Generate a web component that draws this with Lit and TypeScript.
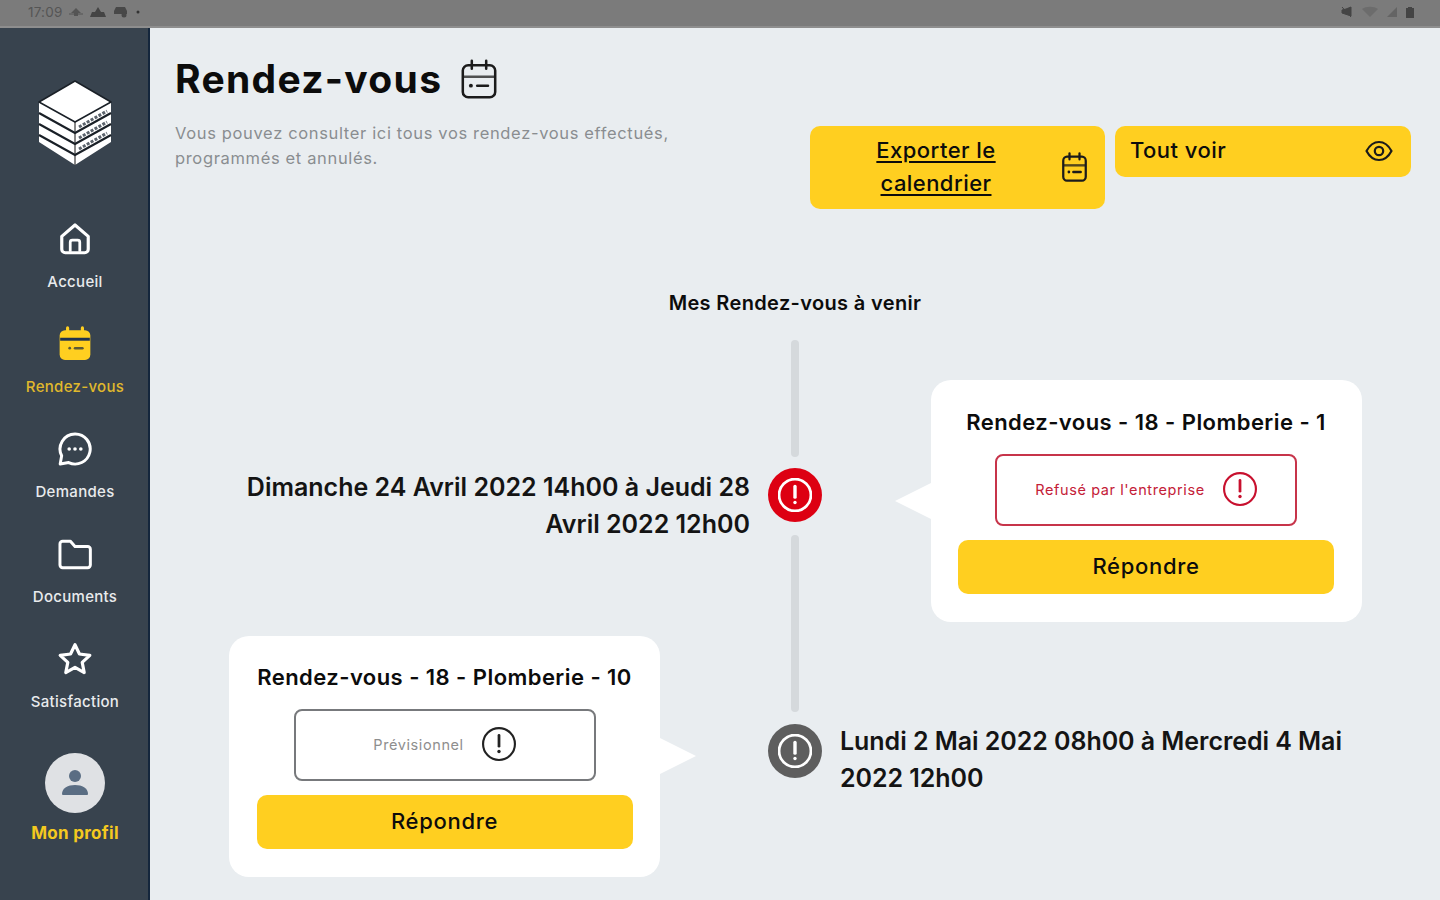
import { LitElement, html, css, svg } from "lit";
import { customElement } from "lit/decorators.js";

const calendar = (stroke: string, w = 2) => svg`
  <rect x="3" y="4.500" width="18" height="18" rx="3" fill="none" stroke=${stroke} stroke-width=${w}/>
  <path d="M8 2v4.500M16 2v4.500" stroke=${stroke} stroke-width=${w} stroke-linecap="round" fill="none"/>
  <path d="M3 11h18" stroke=${stroke} stroke-width=${w} fill="none" opacity=".75"/>
  <path d="M11 16h6" stroke=${stroke} stroke-width=${w} stroke-linecap="round" fill="none"/>
  <circle cx="7.500" cy="16" r="1.100" fill=${stroke}/>`;

const alertIcon = (c: string, sw = 2) => svg`
  <circle cx="16" cy="16" r="15" fill="none" stroke=${c} stroke-width=${sw}/>
  <path d="M16 8v10" stroke=${c} stroke-width=${sw + 0.6} stroke-linecap="round"/>
  <circle cx="16" cy="23" r="1.600" fill=${c}/>`;

const NAV = [
  {
    label: "Accueil",
    active: false,
    icon: svg`<path d="M3.500 13.500 16 2.800l12.500 10.700v12.200a3.300 3.300 0 0 1-3.300 3.300H6.800a3.300 3.300 0 0 1-3.300-3.300Z" fill="none" stroke="#fff" stroke-width="3" stroke-linejoin="round"/>
      <path d="M11.500 28V19a2 2 0 0 1 2-2h5a2 2 0 0 1 2 2v9" fill="none" stroke="#fff" stroke-width="2.600"/>`,
  },
  {
    label: "Rendez-vous",
    active: true,
    icon: svg`<rect x="1.500" y="3" width="29" height="28" rx="5" fill="#ffcf20"/>
      <path d="M9 .8v6M23 .8v6" stroke="#ffcf20" stroke-width="3" stroke-linecap="round"/>
      <path d="M2 11.500h28" stroke="#22334d" stroke-width="2.800"/>
      <path d="M16 20h7" stroke="#5c5a36" stroke-width="2.400" stroke-linecap="round"/>
      <circle cx="11" cy="20" r="1.300" fill="#5c5a36"/>`,
  },
  {
    label: "Demandes",
    active: false,
    icon: svg`<path d="M16 1.800a14.200 14.200 0 1 1-6 27L2 30.200l1.400-7.800A14.200 14.200 0 0 1 16 1.800Z" fill="none" stroke="#fff" stroke-width="2.800" stroke-linejoin="round"/>
      <circle cx="10.500" cy="16" r="1.700" fill="#fff"/><circle cx="16" cy="16" r="1.700" fill="#fff"/><circle cx="21.500" cy="16" r="1.700" fill="#fff"/>`,
  },
  {
    label: "Documents",
    active: false,
    icon: svg`<path d="M1.800 6.500A2.500 2.500 0 0 1 4.300 4h7.400l4.300 5h12a2.500 2.500 0 0 1 2.500 2.500v15A2.500 2.500 0 0 1 28 29H4.300a2.500 2.500 0 0 1-2.500-2.500Z" fill="none" stroke="#fff" stroke-width="2.800" stroke-linejoin="round"/>`,
  },
  {
    label: "Satisfaction",
    active: false,
    icon: svg`<path d="m16 2.500 4.200 8.800 9.800 1.300-7.200 6.600 1.900 9.600-8.700-4.800-8.700 4.800 1.900-9.600L2 12.600l9.800-1.300Z" fill="none" stroke="#fff" stroke-width="3" stroke-linejoin="round"/>`,
  },
];

@customElement("app-root")
export class AppRoot extends LitElement {
  static styles = css`
    :host {
      display: block;
      width: 1440px;
      height: 900px;
      overflow: hidden;
      font-family: Inter, "Noto Sans", "Liberation Sans", sans-serif;
      color: #0c0c0c;
    }
    .status {
      height: 28px;
      background: #7b7b7b;
      box-sizing: border-box;
      border-bottom: 2px solid #8e8e8e;
      display: flex;
      align-items: center;
      justify-content: space-between;
      padding: 0 25px 2px 28px;
      color: #555;
      font-size: 13.500px;
      letter-spacing: 0.2px;
    }
    .status-left, .status-right { display: flex; align-items: center; gap: 7px; }
    .status svg { display: block; }
    .body { display: flex; height: 872px; }
    .side {
      width: 150px;
      flex: none;
      box-sizing: border-box;
      background: #38434e;
      border-right: 2px solid #14263c;
      display: flex;
      flex-direction: column;
      align-items: center;
      padding: 52px 0 0 2px;
    }
    .logo { display: block; margin-bottom: 55px; }
    .nav { display: flex; flex-direction: column; align-items: center; gap: 33px; width: 100%; }
    .item { display: flex; flex-direction: column; align-items: center; height: 72px; }
    .item svg { display: block; width: 36px; height: 36px; }
    .item span {
      margin-top: 14px;
      font-size: 15px;
      line-height: 22px;
      font-weight: 500;
      letter-spacing: 0.3px;
      color: #e9ebed;
      white-space: nowrap;
    }
    .item.active span { color: #e0b92c; }
    .avatar {
      width: 60px;
      height: 60px;
      border-radius: 50%;
      background: #dfe1e4;
      margin-top: 40px;
      display: flex;
      align-items: center;
      justify-content: center;
    }
    .profile {
      margin-top: 9px;
      font-size: 17px;
      line-height: 22px;
      font-weight: 700;
      letter-spacing: 0.3px;
      color: #f4c91f;
    }
    .main { flex: 1; background: #e9edf0; min-width: 0; }
    .head {
      display: flex;
      justify-content: space-between;
      align-items: flex-start;
      padding: 27px 29px 0 25px;
    }
    .title { display: flex; align-items: center; gap: 19px; }
    h1 {
      margin: 0;
      font-size: 39px;
      line-height: 48px;
      font-weight: 700;
      letter-spacing: 1.3px;
    }
    .title svg { display: block; width: 36px; height: 40px; }
    .sub {
      margin: 17.500px 0 0;
      font-size: 16.500px;
      line-height: 25px;
      letter-spacing: 0.65px;
      color: #8a8d90;
    }
    .actions { display: flex; gap: 10px; margin-top: 71px; align-items: flex-start; }
    .btn {
      width: 295px;
      box-sizing: border-box;
      background: #ffcf20;
      border-radius: 10px;
      display: flex;
      align-items: center;
      font-size: 22px;
      font-weight: 500;
      line-height: 33px;
      letter-spacing: 0.45px;
    }
    .btn.export { padding: 8px 18px 9px 0; }
    .btn.export u { flex: 1; text-align: center; text-underline-offset: 3px; }
    .btn.all { padding: 8px 18px 10px 15px; justify-content: space-between; width: 296px; }
    .btn svg { display: block; flex: none; }
    .heading {
      margin: 80px 0 0;
      text-align: center;
      font-size: 20px;
      line-height: 28px;
      font-weight: 600;
      letter-spacing: 0.35px;
    }
    .timeline {
      display: grid;
      grid-template-columns: 600px 54px 1fr;
      column-gap: 18px;
      margin-top: 23px;
    }
    .col-l { display: flex; flex-direction: column; align-items: flex-end; padding-top: 128.500px; }
    .col-r { display: flex; flex-direction: column; align-items: flex-start; padding-top: 40px; }
    .date { font-size: 25px; line-height: 37px; font-weight: 600; white-space: nowrap; color: #141414; }
    .col-l .date { text-align: right; }
    .col-l .card { margin: 93.500px 90px 0 0; height: 241px; padding-top: 26px; }
    .col-l .card::after { top: 102px; }
    .col-r .card { margin-left: 91px; padding-left: 26.500px; padding-right: 27.500px; }
    .col-r .date { margin-top: 100.500px; letter-spacing: -0.05px; }
    .rail { display: flex; flex-direction: column; align-items: center; }
    .line { width: 8px; background: #d5d9dc; border-radius: 4px; }
    .l1 { height: 117px; }
    .l2 { height: 177px; margin-top: 13px; }
    .dot {
      width: 54px;
      height: 54px;
      border-radius: 50%;
      display: flex;
      align-items: center;
      justify-content: center;
      flex: none;
    }
    .dot.red { background: #dd0012; margin-top: 11px; }
    .dot.grey { background: #5e5e5e; margin-top: 12px; }
    .card {
      position: relative;
      width: 431px;
      height: 242px;
      box-sizing: border-box;
      background: #fff;
      border-radius: 20px;
      padding: 27px 27px 0;
      display: flex;
      flex-direction: column;
      align-items: center;
    }
    .card::after {
      content: "";
      position: absolute;
      top: 103px;
      width: 36px;
      height: 36px;
      background: #fff;
    }
    .card.tail-l::after { left: -36px; clip-path: polygon(100% 0, 100% 100%, 0 50%); }
    .card.tail-r::after { right: -36px; clip-path: polygon(0 0, 100% 50%, 0 100%); }
    .card h3 {
      margin: 0;
      font-size: 22px;
      line-height: 30px;
      font-weight: 600;
      letter-spacing: 0.45px;
      white-space: nowrap;
    }
    .state {
      margin-top: 17px;
      width: 302px;
      height: 72px;
      box-sizing: border-box;
      border: 2px solid #77797c;
      border-radius: 8px;
      padding-bottom: 2px;
      display: flex;
      align-items: center;
      justify-content: center;
      gap: 18px;
      font-size: 14.500px;
      letter-spacing: 0.6px;
      color: #8e8e8e;
    }
    .state svg { display: block; }
    .state.refused { border-color: #c7344a; color: #c42037; }
    .reply {
      margin-top: 14px;
      width: 376px;
      height: 54px;
      flex: none;
      box-sizing: border-box;
      padding-bottom: 3px;
      border-radius: 10px;
      background: #ffcf20;
      display: flex;
      align-items: center;
      justify-content: center;
      font-size: 22px;
      font-weight: 500;
      letter-spacing: 0.7px;
    }
  `;

  render() {
    return html`
      <div class="status">
        <div class="status-left">
          <span>17:09</span>
          <svg width="14" height="10" viewBox="0 0 14 10"><path d="M7 1 12 6H9v3H5V6H2Z" fill="#555"/><path d="M0 7h14" stroke="#555"/></svg>
          <svg width="16" height="12" viewBox="0 0 16 12"><path d="M8 1l3 5h3l2 5H0l2-5h3Z" fill="#444"/></svg>
          <svg width="16" height="12" viewBox="0 0 16 12"><path d="M3 1h9l2 4v3H1V5Z" fill="#484848"/><circle cx="11" cy="9" r="2.500" fill="#484848"/></svg>
          <svg width="4" height="4" viewBox="0 0 4 4"><circle cx="2" cy="2" r="1.500" fill="#333"/></svg>
        </div>
        <div class="status-right">
          <svg width="14" height="12" viewBox="0 0 14 12"><path d="M2 1l9 10M6 3l5-2v9L2 7V4Z" fill="#444" stroke="#444"/></svg>
          <svg width="18" height="12" viewBox="0 0 18 12"><path d="M1 3c4-3 12-3 16 0l-8 8Z" fill="#6c6c6c"/></svg>
          <svg width="12" height="12" viewBox="0 0 12 12"><path d="M11 1v10H1Z" fill="#646464"/></svg>
          <svg width="10" height="13" viewBox="0 0 10 13"><path d="M3 1h4v1h2v10H1V2h2Z" fill="#444"/></svg>
        </div>
      </div>
      <div class="body">
        <aside class="side">
          <svg class="logo" width="76" height="86" viewBox="0 0 76 86">
            <path d="M38 42 74 22v40L38 85 2 62V22Z" fill="#fff"/>
            <path d="M38 42v43" stroke="#111" stroke-width="1"/>
            <path d="M2 33l36 20 36-20M2 44l36 20 36-20M2 55l36 20 36-20" fill="none" stroke="#1a2027" stroke-width="2.200"/>
            <path d="M42 47 70 31M42 58 70 42M42 69 70 53" fill="none" stroke="#5b636c" stroke-width="3" stroke-dasharray="3 1.500"/>
            <path d="M38 1 74 22 38 42 2 22Z" fill="#fff" stroke="#1a2027" stroke-width="1.500" stroke-linejoin="round"/>
          </svg>
          <nav class="nav">
            ${NAV.map(
              (n) => html`<div class="item ${n.active ? "active" : ""}">
                <svg viewBox="-1 -1 34 34">${n.icon}</svg><span>${n.label}</span>
              </div>`
            )}
          </nav>
          <div class="avatar">
            <svg width="32" height="32" viewBox="0 0 32 32">
              <circle cx="16" cy="9" r="6" fill="#5a6d83"/>
              <path d="M3 27c0-6 6-9 13-9s13 3 13 9a1 1 0 0 1-1 1H4a1 1 0 0 1-1-1Z" fill="#5a6d83"/>
            </svg>
          </div>
          <div class="profile">Mon profil</div>
        </aside>
        <main class="main">
          <header class="head">
            <div>
              <div class="title">
                <h1>Rendez-vous</h1>
                <svg viewBox="2 1 20 22.500" preserveAspectRatio="none">${calendar("#1b1b1b", 1.4)}</svg>
              </div>
              <p class="sub">Vous pouvez consulter ici tous vos rendez-vous effectués,<br />programmés et annulés.</p>
            </div>
            <div class="actions">
              <div class="btn export">
                <u>Exporter le<br />calendrier</u>
                <svg width="25" height="30" viewBox="2 1 20 22.500" preserveAspectRatio="none">${calendar("#1b1b1b", 1.8)}</svg>
              </div>
              <div class="btn all">
                <span>Tout voir</span>
                <svg width="28" height="22" viewBox="0 0 28 22">
                  <path d="M1.500 11C5 4.500 9 2 14 2s9 2.500 12.500 9C23 17.500 19 20 14 20S5 17.500 1.500 11Z" fill="none" stroke="#1b1b1b" stroke-width="2.200" stroke-linejoin="round"/>
                  <circle cx="14" cy="11" r="4.200" fill="none" stroke="#1b1b1b" stroke-width="2.200"/>
                </svg>
              </div>
            </div>
          </header>
          <h2 class="heading">Mes Rendez-vous à venir</h2>
          <section class="timeline">
            <div class="col-l">
              <div class="date">Dimanche 24 Avril 2022 14h00 à Jeudi 28<br />Avril 2022 12h00</div>
              <article class="card tail-r">
                <h3>Rendez-vous - 18 - Plomberie - 10</h3>
                <div class="state">
                  <span>Prévisionnel</span>
                  <svg width="34" height="34" viewBox="0 0 32 32">${alertIcon("#222")}</svg>
                </div>
                <div class="reply">Répondre</div>
              </article>
            </div>
            <div class="rail">
              <div class="line l1"></div>
              <div class="dot red"><svg width="34" height="34" viewBox="0 0 32 32">${alertIcon("#fff", 2.600)}</svg></div>
              <div class="line l2"></div>
              <div class="dot grey"><svg width="34" height="34" viewBox="0 0 32 32">${alertIcon("#fff", 2.600)}</svg></div>
            </div>
            <div class="col-r">
              <article class="card tail-l">
                <h3>Rendez-vous - 18 - Plomberie - 1</h3>
                <div class="state refused">
                  <span>Refusé par l'entreprise</span>
                  <svg width="34" height="34" viewBox="0 0 32 32">${alertIcon("#c8102e")}</svg>
                </div>
                <div class="reply">Répondre</div>
              </article>
              <div class="date">Lundi 2 Mai 2022 08h00 à Mercredi 4 Mai<br />2022 12h00</div>
            </div>
          </section>
        </main>
      </div>
    `;
  }
}
